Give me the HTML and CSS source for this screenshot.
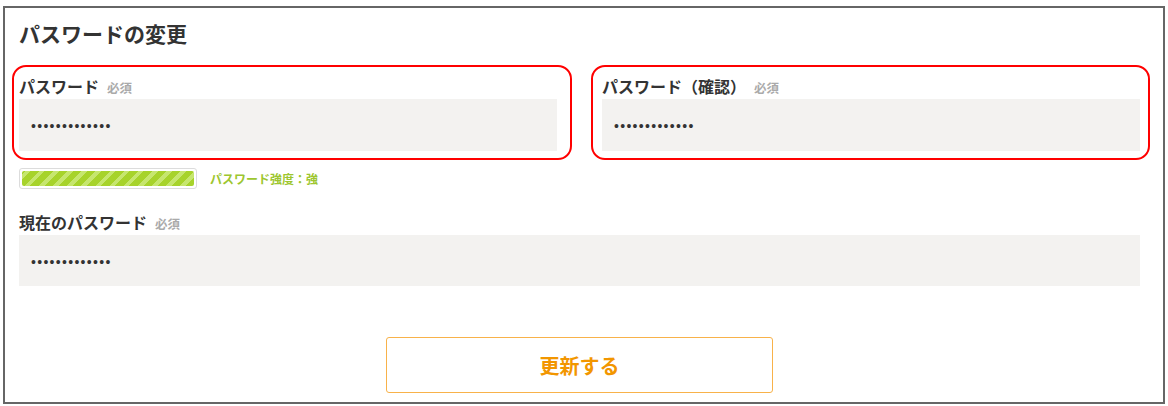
FILE: index.html
```html
<!DOCTYPE html>
<html lang="ja">
<head>
<meta charset="utf-8">
<title>パスワードの変更</title>
<link rel="stylesheet" href="styles.css">
</head>
<body>
<div class="frame">
  <h2 class="title">パスワードの変更</h2>
  <div class="pair">
    <div class="field mark mark-left">
      <label class="label">パスワード<span class="req">必須</span></label>
      <input class="input" type="password" value="abcdefghijklm" readonly>
    </div>
    <div class="field mark mark-right">
      <label class="label">パスワード（確認）<span class="req">必須</span></label>
      <input class="input" type="password" value="abcdefghijklm" readonly>
    </div>
  </div>
  <div class="strength">
    <div class="meter"><div class="meter-fill"></div></div>
    <span class="strength-text">パスワード強度：強</span>
  </div>
  <div class="field current">
    <label class="label">現在のパスワード<span class="req">必須</span></label>
    <input class="input" type="password" value="abcdefghijklm" readonly>
  </div>
  <div class="actions">
    <button class="submit" type="button">更新する</button>
  </div>
</div>
</body>
</html>
```

FILE: styles.css
```css
* { box-sizing: border-box; }
html, body { margin: 0; padding: 0; background: #fff; }
body {
  font-family: "Noto Sans CJK JP", "Noto Sans", sans-serif;
  color: #333;
}
.frame {
  margin: 6px 0 0 3px;
  width: 1162px;
  height: 398px;
  border: 2px solid #666;
  padding: 0 23px 0 14px;
}
.title {
  margin: 11px 0 0;
  font-size: 21px;
  line-height: 28px;
  font-weight: 700;
  color: #333;
}
.pair {
  margin-top: 29px;
  display: grid;
  grid-template-columns: 538px 538px;
  column-gap: 45px;
}
.field { position: relative; }
.label {
  display: flex;
  align-items: baseline;
  height: 20px;
  overflow: visible;
  font-size: 16px;
  line-height: 20px;
  font-weight: 700;
  color: #333;
  margin-bottom: 3px;
}
.req {
  font-size: 12.5px;
  line-height: 16px;
  color: #aaa;
  margin-left: 8px;
  font-weight: 700;
}
.input {
  display: block;
  width: 100%;
  height: 52px;
  border: none;
  outline: none;
  background: #f3f2f0;
  padding: 2px 12px 0;
  font-family: "Liberation Sans", sans-serif;
  font-size: 14px;
  letter-spacing: 1.3px;
  color: #333;
}
.mark::after {
  content: "";
  position: absolute;
  top: -11px;
  bottom: -9px;
  border: 2px solid #f00;
  border-radius: 14px;
  pointer-events: none;
}
.mark-left::after { left: -7px; right: -15px; }
.mark-right::after { left: -11px; right: -10px; }
.strength {
  margin-top: 17px;
  display: flex;
  align-items: center;
  gap: 13px;
  height: 21px;
}
.meter {
  width: 178px;
  height: 21px;
  border: 1px solid #dcdcdc;
  border-radius: 3px;
  padding: 2px;
  background: #fff;
}
.meter-fill {
  height: 100%;
  border-radius: 2px;
  background: repeating-linear-gradient(
    -45deg,
    #a7d32b 0px,
    #a7d32b 6px,
    #c6e66e 6px,
    #c6e66e 10px
  );
}
.strength-text {
  font-size: 12px;
  font-weight: 700;
  color: #9dc62f;
}
.current { margin-top: 23px; }
.current .input { height: 51px; }
.actions {
  margin-top: 51px;
  display: flex;
  justify-content: center;
}
.submit {
  width: 387px;
  height: 56px;
  border: 1px solid #f8b24a;
  border-radius: 3px;
  background: #fff;
  font-family: "Noto Sans CJK JP", "Noto Sans", sans-serif;
  font-size: 20px;
  font-weight: 700;
  color: #f29600;
  cursor: pointer;
}
```
